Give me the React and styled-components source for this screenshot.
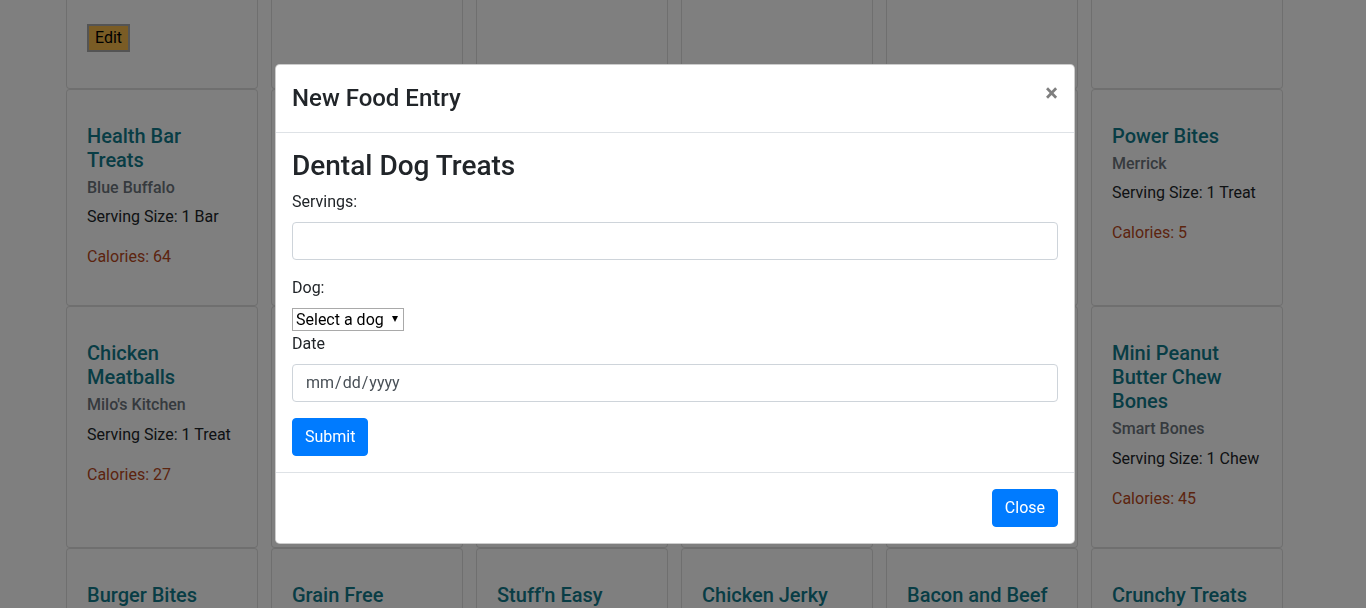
import React from 'react'
import styled, { createGlobalStyle } from 'styled-components'

const GlobalStyle = createGlobalStyle`
  * { box-sizing: border-box; }
  body {
    margin: 0;
    font-family: Roboto, "Liberation Sans", sans-serif;
    font-size: 16px;
    line-height: 1.5;
    color: #212529;
    background: #fff;
    overflow: hidden;
  }
`

const foods = [
  { name: 'Rawhide Roll', brand: 'Pet Factory', size: '1 Roll', cal: 40, edit: true },
  { name: 'Jerky Tenders', brand: 'Purina', size: '1 Piece', cal: 30 },
  { name: 'Soft Chews', brand: 'Zuke\'s', size: '1 Treat', cal: 3 },
  { name: 'Pup-Peroni', brand: 'Del Monte', size: '1 Stick', cal: 22 },
  { name: 'Greenies', brand: 'Greenies', size: '1 Chew', cal: 90 },
  { name: 'Beggin Strips', brand: 'Purina', size: '1 Strip', cal: 30 },

  { name: 'Health Bar Treats', brand: 'Blue Buffalo', size: '1 Bar', cal: 64 },
  { name: 'Dental Dog Treats', brand: 'Greenies', size: '1 Treat', cal: 25 },
  { name: 'Chicken Chips', brand: 'Wellness', size: '1 Chip', cal: 12 },
  { name: 'Beef Sticks', brand: 'Pedigree', size: '1 Stick', cal: 35 },
  { name: 'Lamb Bites', brand: 'Nutro', size: '1 Treat', cal: 9 },
  { name: 'Power Bites', brand: 'Merrick', size: '1 Treat', cal: 5 },

  { name: 'Chicken Meatballs', brand: 'Milo\'s Kitchen', size: '1 Treat', cal: 27 },
  { name: 'Duck Jerky', brand: 'Blue Buffalo', size: '1 Piece', cal: 18 },
  { name: 'Trail Treats', brand: 'Hubbard', size: '1 Treat', cal: 10 },
  { name: 'Salmon Snacks', brand: 'Wellness', size: '1 Treat', cal: 6 },
  { name: 'Pumpkin Bites', brand: 'Fruitables', size: '1 Treat', cal: 8 },
  { name: 'Mini Peanut Butter Chew Bones', brand: 'Smart Bones', size: '1 Chew', cal: 45 },

  { name: 'Burger Bites', brand: 'Pup-Peroni', size: '1 Treat', cal: 15 },
  { name: 'Grain Free', brand: 'Wellness', size: '1 Treat', cal: 12 },
  { name: 'Stuff\'n Easy', brand: 'KONG', size: '1 Tbsp', cal: 40 },
  { name: 'Chicken Jerky', brand: 'Waggin\' Train', size: '1 Piece', cal: 25 },
  { name: 'Bacon and Beef', brand: 'Beggin', size: '1 Strip', cal: 30 },
  { name: 'Crunchy Treats', brand: 'Milk-Bone', size: '1 Biscuit', cal: 20 },
]

function App() {
  return (
    <>
      <GlobalStyle />
      <Grid>
        {foods.map((f, i) => (
          <Card key={i}>
            <CardTitle>{f.name}</CardTitle>
            <CardSub>{f.brand}</CardSub>
            <CardText>Serving Size: {f.size}</CardText>
            <CardText $cal>Calories: {f.cal}</CardText>
            {f.edit && <EditBtn>Edit</EditBtn>}
          </Card>
        ))}
      </Grid>

      <Backdrop />
      <ModalWrap>
        <Dialog>
          <Header>
            <ModalTitle>New Food Entry</ModalTitle>
            <CloseX aria-label="Close">×</CloseX>
          </Header>
          <Body>
            <FoodName>Dental Dog Treats</FoodName>
            <Group>
              <Label>Servings:</Label>
              <Field type="number" />
            </Group>
            <Group>
              <Label>Dog:</Label>
              <SelectWrap>
                <Select defaultValue="">
                  <option value="">Select a dog</option>
                </Select>
                <Caret />
              </SelectWrap>
              <Label>Date</Label>
              <Field type="date" />
            </Group>
            <Button>Submit</Button>
          </Body>
          <Footer>
            <Button $foot>Close</Button>
          </Footer>
        </Dialog>
      </ModalWrap>
    </>
  )
}
export default App

const Grid = styled.div`
  display: grid;
  grid-template-columns: repeat(6, 192px);
  column-gap: 13px;
  row-gap: 0;
  padding-left: 66px;
  margin-top: -155px;
`
const Card = styled.div`
  display: flex;
  flex-direction: column;
  align-items: flex-start;
  background: #fff;
  border: 1px solid rgba(0, 0, 0, .125);
  border-radius: 4px;
  padding: 34px 20px 20px;
`
const CardTitle = styled.h5`
  margin: 0 0 12px;
  font-size: 20px;
  font-weight: 500;
  line-height: 1.2;
  color: #117a8b;
`
const CardSub = styled.h6`
  margin: -6px 0 8px;
  font-size: 16px;
  font-weight: 500;
  line-height: 1.2;
  color: #6c757d;
`
const CardText = styled.p`
  margin: 0 0 16px;
  color: ${p => (p.$cal ? '#b8481c' : '#212529')};
`
const EditBtn = styled.button`
  font-family: Roboto, "Liberation Sans", sans-serif;
  font-size: 16px;
  line-height: 20px;
  padding: 2px 6px;
  margin: 7px 0 16px;
  color: #000;
  background: #f5b94a;
  border: 2px solid #a8a8a8;
`
const Backdrop = styled.div`
  position: fixed;
  inset: 0;
  background: rgba(0, 0, 0, .5);
`
const ModalWrap = styled.div`
  position: fixed;
  inset: 0;
  display: flex;
  align-items: center;
  justify-content: center;
  padding-right: 16px;
`
const Dialog = styled.div`
  width: 800px;
  background: #fff;
  border: 1px solid rgba(0, 0, 0, .2);
  border-radius: 4.8px;
  display: flex;
  flex-direction: column;
`
const Header = styled.div`
  display: flex;
  align-items: flex-start;
  padding: 16px;
  border-bottom: 1px solid #dee2e6;
`
const ModalTitle = styled.h4`
  margin: 0;
  font-size: 24px;
  font-weight: 500;
  line-height: 35px;
`
const CloseX = styled.button`
  margin: -16px -16px -16px auto;
  padding: 16px;
  background: transparent;
  border: 0;
  font-family: Roboto, "Liberation Sans", sans-serif;
  font-size: 24px;
  font-weight: 700;
  line-height: 1;
  color: #000;
  opacity: .5;
  text-shadow: 0 1px 0 #fff;
`
const Body = styled.div`
  padding: 16px;
  display: flex;
  flex-direction: column;
  align-items: flex-start;
`
const FoodName = styled.h3`
  margin: 0 0 7px;
  font-size: 28px;
  font-weight: 500;
  line-height: 1.2;
`
const Group = styled.div`
  display: flex;
  flex-direction: column;
  align-items: flex-start;
  align-self: stretch;
  margin-bottom: 16px;
`
const Label = styled.label`
  margin-bottom: 8px;
`
const Field = styled.input`
  display: block;
  width: 100%;
  height: 38px;
  padding: 6px 12px;
  font-family: Roboto, "Liberation Sans", sans-serif;
  font-size: 16px;
  line-height: 1.5;
  color: #495057;
  background: #fff;
  border: 1px solid #ced4da;
  border-radius: 4px;
  &::-webkit-calendar-picker-indicator { display: none; }
  &::-webkit-inner-spin-button { display: none; }
`
const SelectWrap = styled.div`
  position: relative;
  display: inline-block;
  height: 24px;
`
const Select = styled.select`
  appearance: none;
  display: block;
  height: 23px;
  padding: 0 19px 0 3px;
  font-family: Roboto, "Liberation Sans", sans-serif;
  font-size: 16px;
  line-height: 21px;
  color: #000;
  background: #fff;
  border: 1px solid #a9a9a9;
  border-radius: 0;
`
const Caret = styled.span`
  position: absolute;
  right: 6px;
  top: 8px;
  width: 0;
  height: 0;
  border-left: 3.5px solid transparent;
  border-right: 3.5px solid transparent;
  border-top: 6px solid #000;
  pointer-events: none;
`
const Button = styled.button`
  font-family: Roboto, "Liberation Sans", sans-serif;
  font-size: 16px;
  line-height: 1.5;
  padding: 6px 12px;
  margin: ${p => (p.$foot ? '4px' : '0')};
  color: #fff;
  background: #007bff;
  border: 1px solid #007bff;
  border-radius: 4px;
`
const Footer = styled.div`
  display: flex;
  justify-content: flex-end;
  padding: 12px;
  border-top: 1px solid #dee2e6;
`
